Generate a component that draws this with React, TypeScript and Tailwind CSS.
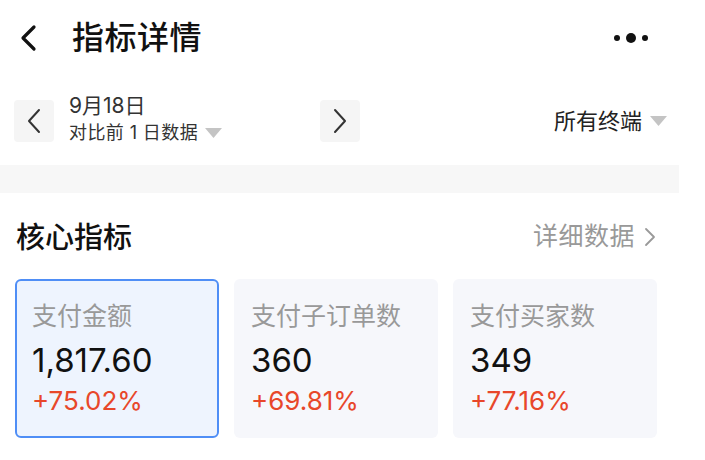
import React from 'react';

const FONT = { fontFamily: 'Inter, "Noto Sans CJK SC", sans-serif' };

const Triangle: React.FC<{ className?: string }> = ({ className }) => (
  <svg width="17" height="10" viewBox="0 0 17 10" className={className}>
    <path d="M0 0 H17 L8.5 10 Z" fill="#c4c4c4" />
  </svg>
);

const metrics = [
  { label: '支付金额', value: '1,817.60', delta: '+75.02%', active: true },
  { label: '支付子订单数', value: '360', delta: '+69.81%', active: false },
  { label: '支付买家数', value: '349', delta: '+77.16%', active: false },
];

export default function App() {
  return (
    <div className="w-[705px] h-[460px] bg-white overflow-hidden text-[#111]" style={FONT}>
      <div className="w-[679px]">
        {/* top bar */}
        <div className="h-[75px] flex items-center">
          <svg width="20" height="28" viewBox="0 0 20 28" className="ml-[18px]">
            <path d="M16 3 L5 14 L16 25" fill="none" stroke="#111" strokeWidth="3.2" strokeLinecap="round" strokeLinejoin="round" />
          </svg>
          <h1 className="ml-[34px] text-[32px] leading-none font-medium tracking-[0.5px]">指标详情</h1>
          <div className="ml-auto mr-[31px] flex items-center gap-[6px]">
            <span className="w-[6px] h-[6px] rounded-full bg-[#111]" />
            <span className="w-[10px] h-[10px] rounded-full bg-[#111]" />
            <span className="w-[6px] h-[6px] rounded-full bg-[#111]" />
          </div>
        </div>

        {/* date row */}
        <div className="mt-[25px] h-[42px] flex items-center">
          <button className="ml-[14px] w-[40px] h-[42px] rounded-[4px] bg-[#f5f5f5] flex items-center justify-center">
            <svg width="14" height="26" viewBox="0 0 14 26">
              <path d="M12 2 L2 13 L12 24" fill="none" stroke="#333" strokeWidth="2" strokeLinecap="round" strokeLinejoin="round" />
            </svg>
          </button>
          <div className="self-start -mt-[5px] w-[266px] pl-[15px] flex flex-col text-[#333]">
            <span className="text-[21px] leading-[22px]">9月18日</span>
            <span className="flex items-center text-[18px] leading-[22px] mt-[5px] tracking-[0.4px]">
              对比前 1 日数据
              <Triangle className="ml-[7px]" />
            </span>
          </div>
          <button className="w-[40px] h-[42px] rounded-[4px] bg-[#f5f5f5] flex items-center justify-center">
            <svg width="14" height="26" viewBox="0 0 14 26">
              <path d="M2 2 L12 13 L2 24" fill="none" stroke="#333" strokeWidth="2" strokeLinecap="round" strokeLinejoin="round" />
            </svg>
          </button>
          <div className="ml-auto mr-[12px] flex items-center text-[22px] text-[#222]">
            所有终端
            <Triangle className="ml-[8px]" />
          </div>
        </div>

        {/* divider band */}
        <div className="mt-[23px] h-[28px] bg-[#f7f7f7]" />

        {/* section header */}
        <div className="mt-[29px] h-[30px] flex items-center px-[16px]">
          <h2 className="text-[29px] leading-none font-medium">核心指标</h2>
          <div className="ml-auto mr-[7px] flex items-center text-[25px] text-[#999] tracking-[0.5px]">
            详细数据
            <svg width="12" height="20" viewBox="0 0 12 20" className="ml-[9px]">
              <path d="M2 2 L10 10 L2 18" fill="none" stroke="#999" strokeWidth="1.8" strokeLinecap="round" strokeLinejoin="round" />
            </svg>
          </div>
        </div>

        {/* metric cards */}
        <div className="mt-[27px] ml-[15px] flex gap-[15px]">
          {metrics.map((m) => (
            <div
              key={m.label}
              className={
                m.active
                  ? 'w-[204px] h-[159px] rounded-[6px] border-2 border-[#4f8ef6] bg-[#eef4fe] pl-[15px] pt-[21px]'
                  : 'w-[204px] h-[159px] rounded-[6px] bg-[#f6f7fb] pl-[17px] pt-[23px]'
              }
            >
              <div className="text-[25px] leading-[28px] text-[#999]">{m.label}</div>
              <div className="mt-[12px] text-[33px] leading-[36px] text-[#111]">{m.value}</div>
              <div className="mt-[8px] text-[26px] leading-[30px] text-[#e8472a]">{m.delta}</div>
            </div>
          ))}
        </div>
      </div>
    </div>
  );
}
